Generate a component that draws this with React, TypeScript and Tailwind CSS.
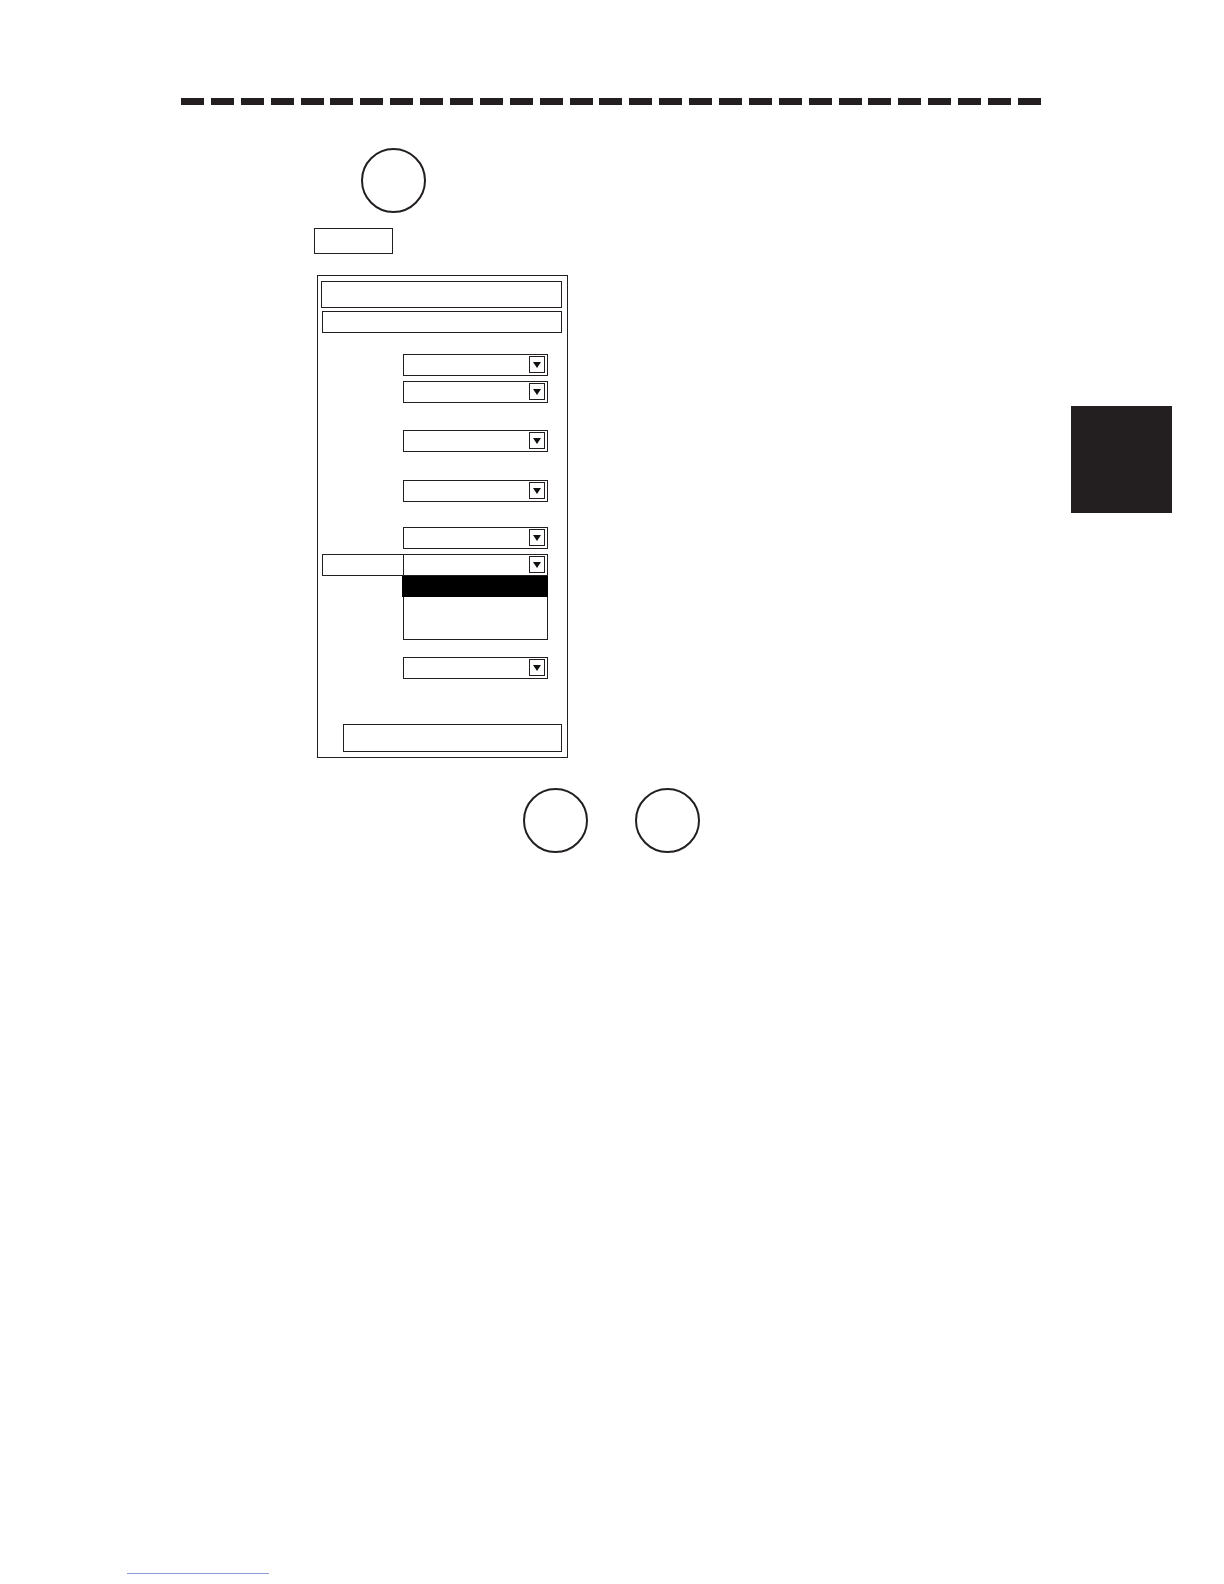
import React from 'react';

const ink = 'border-[#231f20]';

const Arrow: React.FC = () => (
  <div className="mr-[2px] flex h-[17px] w-[16px] items-center justify-center border-[1.5px] border-[#231f20] bg-white">
    <svg width="8" height="6" viewBox="0 0 8 6">
      <polygon points="0,0 8,0 4,6" fill="#111" />
    </svg>
  </div>
);

interface DropdownProps {
  className?: string;
}

const Dropdown: React.FC<DropdownProps> = ({ className = '' }) => (
  <div
    className={`flex h-[22px] w-[145px] items-center justify-end border-[1.5px] ${ink} bg-white ${className}`}
  >
    <Arrow />
  </div>
);

const Circle: React.FC<{ className?: string }> = ({ className = '' }) => (
  <div className={`h-[65px] w-[65px] rounded-full border-2 ${ink} ${className}`} />
);

export default function App() {
  const dashes = Array.from({ length: 29 });

  return (
    <div
      className="flex h-[1584px] w-[1224px] flex-col bg-white"
      style={{ fontFamily: '"Liberation Sans", Arial, sans-serif' }}
    >
      {/* dashed rule */}
      <div className="ml-[181px] mt-[98px] flex gap-[6.9px]">
        {dashes.map((_, i) => (
          <div key={i} className="h-[7px] w-[23px] bg-[#231f20]" />
        ))}
      </div>

      <div className="flex">
        <div className="ml-[314px] flex flex-col">
          <Circle className="ml-[47px] mt-[43px]" />
          <div className={`mt-[15px] h-[26px] w-[79px] border-[1.5px] ${ink}`} />

          {/* dialog panel */}
          <div className={`ml-[3px] mt-[21px] flex h-[483px] w-[251px] flex-col border-[1.5px] ${ink}`}>
            <div className={`ml-[2.5px] mt-[4.5px] h-[27px] w-[241px] border-[1.5px] ${ink}`} />
            <div className={`ml-[3.5px] mt-[3px] h-[22px] w-[240px] border-[1.5px] ${ink}`} />

            <Dropdown className="ml-[84.5px] mt-[21px]" />
            <Dropdown className="ml-[84.5px] mt-[5px]" />
            <Dropdown className="ml-[84.5px] mt-[27px]" />
            <Dropdown className="ml-[84.5px] mt-[28px]" />
            <Dropdown className="ml-[84.5px] mt-[25px]" />

            <div className="ml-[3.5px] mt-[5px] flex">
              <div className={`h-[22px] w-[81px] border-[1.5px] border-r-0 ${ink}`} />
              <Dropdown />
            </div>
            <div className={`ml-[84.5px] flex h-[64px] w-[145px] flex-col border-x-[1.5px] border-b-[1.5px] ${ink}`}>
              <div className="-mx-[1.5px] h-[21px] bg-black" />
            </div>

            <Dropdown className="ml-[84.5px] mt-[17px]" />

            <div className={`ml-[24.5px] mt-[45px] h-[28px] w-[219px] border-[1.5px] ${ink}`} />
          </div>

          <div className="ml-[209px] mt-[30px] flex gap-[47px]">
            <Circle />
            <Circle />
          </div>
        </div>

        {/* chapter tab */}
        <div className="ml-auto mr-[52px] mt-[301px] h-[107px] w-[101px] bg-[#231f20]" />
      </div>

      <div className="mb-[10px] ml-[127px] mt-auto h-px w-[142px] bg-[#8f9cd4]" />
    </div>
  );
}
